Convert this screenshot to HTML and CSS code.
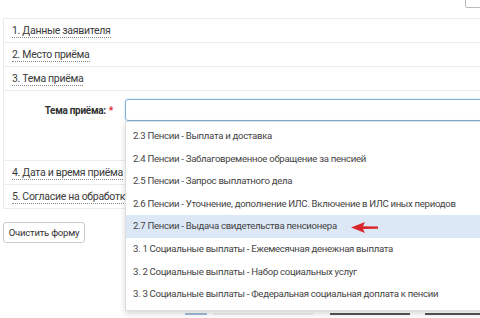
FILE: index.html
```html
<!DOCTYPE html>
<html lang="ru">
<head>
<meta charset="utf-8">
<link rel="stylesheet" href="styles.css">
</head>
<body>
<div class="page">
  <div class="topbar"><span class="corner-btn"></span></div>
  <div class="panel">
    <div class="sec"><span class="sec-title">1. Данные заявителя</span></div>
    <div class="sec"><span class="sec-title">2. Место приёма</span></div>
    <div class="sec"><span class="sec-title">3. Тема приёма</span></div>
    <div class="sec-body">
      <div class="form-row">
        <label class="form-label">Тема приёма:<span class="req">*</span></label>
        <div class="input"></div>
      </div>
    </div>
    <div class="sec"><span class="sec-title">4. Дата и время приёма</span></div>
    <div class="sec"><span class="sec-title">5. Согласие на обработку</span></div>
  </div>
  <div class="actions"><button class="btn">Очистить форму</button></div>
  <div class="under-buttons">
    <span class="ub ub-blue"></span>
    <span class="ub ub-light"></span>
    <span class="ub ub-dark1"></span>
    <span class="ub ub-dark2"></span>
  </div>

  <ul class="dropdown">
    <li>2.3 Пенсии - Выплата и доставка</li>
    <li>2.4 Пенсии - Заблаговременное обращение за пенсией</li>
    <li>2.5 Пенсии - Запрос выплатного дела</li>
    <li>2.6 Пенсии - Уточнение, дополнение ИЛС. Включение в ИЛС иных периодов</li>
    <li class="active">2.7 Пенсии - Выдача свидетельства пенсионера</li>
    <li>3. 1 Социальные выплаты - Ежемесячная денежная выплата</li>
    <li>3. 2 Социальные выплаты - Набор социальных услуг</li>
    <li>3. 3 Социальные выплаты - Федеральная социальная доплата к пенсии</li>
  </ul>

  <svg class="arrow" width="30" height="14" viewBox="0 0 30 14">
    <path d="M1 7.5 L15 2 L13 6.2 L28 6.4 L28 8.8 L13 8.9 L15 13 Z" fill="#d9262b"/>
  </svg>
</div>
</body>
</html>
```
FILE: styles.css
```css
html, body {
  margin: 0;
  padding: 0;
  background: #fff;
  overflow: hidden;
}
body {
  width: 480px;
  height: 318px;
  font-family: Roboto, "Liberation Sans", sans-serif;
  color: #333;
}
.page {
  position: relative;
  height: 318px;
  padding: 0 0 0 3px;
  overflow: hidden;
}
.topbar {
  height: 18px;
  display: flex;
  justify-content: flex-end;
}
.corner-btn {
  display: block;
  width: 16px;
  height: 8px;
  margin-top: -2px;
  margin-right: -3px;
  border: 1px solid #bbb;
  border-radius: 2px;
}
.panel {
  border-top: 1px solid #ececec;
  border-left: 1px solid #ececec;
  margin-right: -10px;
}
.sec {
  height: 23px;
  border-bottom: 1px solid #ececec;
  padding-left: 8px;
  display: flex;
  align-items: center;
}
.sec-title {
  font-size: 10.5px;
  letter-spacing: -0.3px;
  line-height: 13px;
  color: #3a3a3a;
  border-bottom: 1px dotted #888;
}
.sec-body {
  height: 69px;
  border-bottom: 1px solid #ececec;
}
.form-row {
  display: flex;
  align-items: center;
  padding-top: 8px;
}
.form-label {
  width: 109px;
  text-align: right;
  font-size: 10px;
  letter-spacing: -0.3px;
  font-weight: bold;
  color: #333;
  margin-right: 12px;
}
.req {
  color: #d9262b;
  margin-left: 3px;
}
.input {
  flex: 1;
  height: 20px;
  border: 1px solid #7fb0d8;
  border-radius: 3px;
  box-shadow: 0 0 3px rgba(102,175,233,0.35);
}
.actions {
  padding-top: 12px;
}
.btn {
  font-family: inherit;
  font-size: 9.5px;
  letter-spacing: -0.2px;
  color: #333;
  background: #fff;
  border: 1px solid #ccc;
  border-radius: 3px;
  height: 21px;
  width: 82px;
  padding: 0;
  white-space: nowrap;
}
.under-buttons {
  position: absolute;
  left: 0;
  top: 313px;
  width: 480px;
  height: 5px;
}
.ub {
  position: absolute;
  top: 0;
  height: 2px;
}
.ub-blue { left: 185px; width: 22px; background: #9dbbd8; }
.ub-light { left: 213px; width: 100px; background: #eee; }
.ub-dark1 { left: 330px; width: 80px; background: #555; }
.ub-dark2 { left: 425px; width: 60px; background: #555; }
.dropdown {
  position: absolute;
  left: 125px;
  top: 121px;
  width: 380px;
  margin: 0;
  padding: 3px 0 4px;
  list-style: none;
  background: #fff;
  border: 1px solid #ddd;
  box-shadow: 0 3px 6px rgba(0,0,0,0.15);
}
.dropdown li {
  height: 22.6px;
  line-height: 22.6px;
  padding-left: 7px;
  font-size: 9.6px;
  letter-spacing: -0.3px;
  color: #444;
  white-space: nowrap;
}
.dropdown li.active {
  background: #dde8f6;
}
.arrow {
  position: absolute;
  left: 350px;
  top: 220px;
}
```
